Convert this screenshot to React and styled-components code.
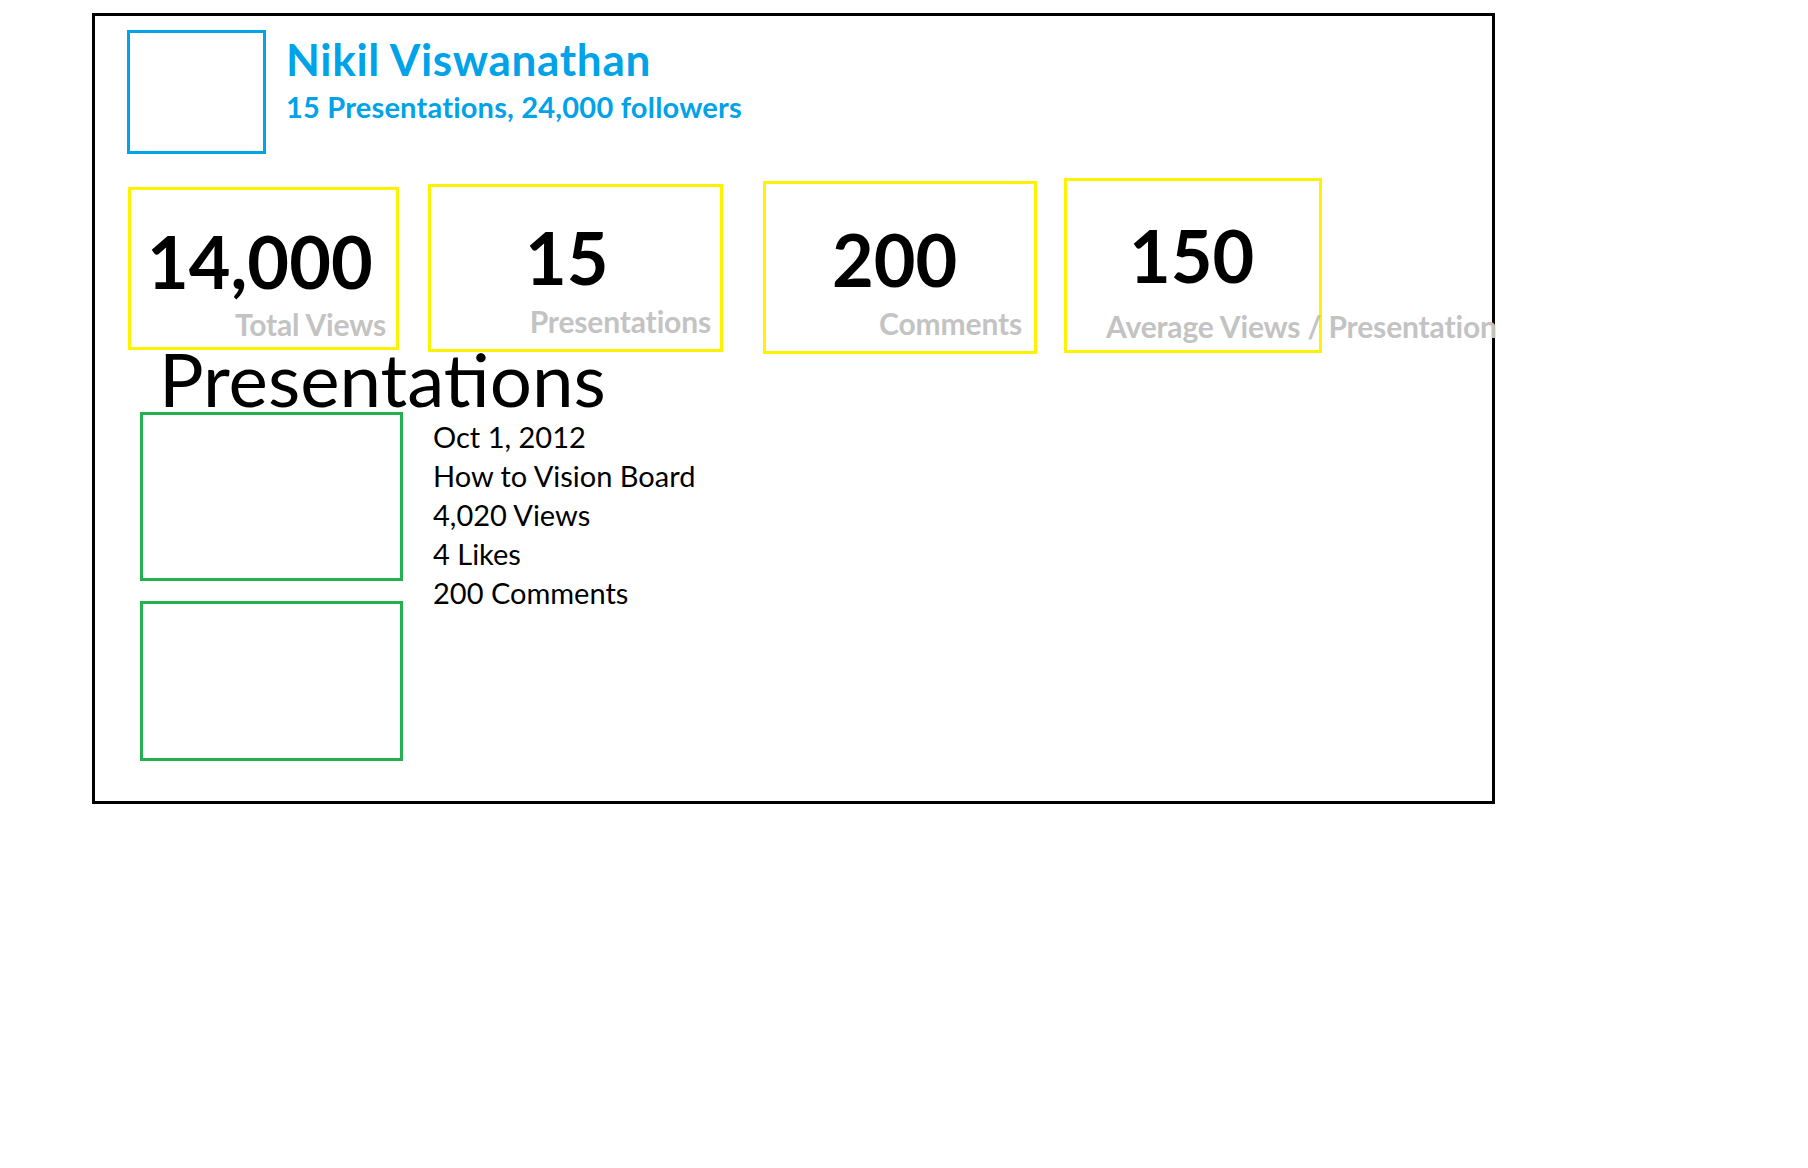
import React from "react";
import styled, { createGlobalStyle } from "styled-components";

const GlobalStyle = createGlobalStyle`
  html, body { margin: 0; padding: 0; background: #ffffff; }
  body { font-family: Lato, "Open Sans", "Liberation Sans", sans-serif; color: #000000; }
  *, *::before, *::after { box-sizing: border-box; }
`;

const Page = styled.div`
  width: 1808px;
  min-height: 1168px;
  padding: 13px 0 0 92px;
`;

const Frame = styled.section`
  width: 1403px;
  height: 791px;
  border: 3px solid #000000;
  padding: 14px 0 0 32px;
`;

const Header = styled.header`
  display: flex;
  align-items: flex-start;
  gap: 20px;
`;

const Avatar = styled.div`
  flex: none;
  width: 139px;
  height: 124px;
  border: 3px solid #00a2e8;
`;

const Identity = styled.div`
  display: flex;
  flex-direction: column;
  padding-top: 8px;
  color: #00a2e8;
`;

const Name = styled.h1`
  margin: 0;
  font-size: 44px;
  line-height: 43px;
  font-weight: 700;
  letter-spacing: 0.7px;
`;

const Meta = styled.p`
  margin: 11px 0 0;
  font-size: 29px;
  line-height: 29px;
  font-weight: 700;
  letter-spacing: 0.2px;
`;

const StatsRow = styled.div`
  display: flex;
  align-items: flex-start;
  margin-top: 24px;
`;

const StatCard = styled.div`
  flex: none;
  display: flex;
  flex-direction: column;
  width: ${(p) => p.$w}px;
  height: ${(p) => p.$h}px;
  margin-top: ${(p) => p.$top}px;
  margin-left: ${(p) => p.$ml}px;
  padding-top: ${(p) => p.$padTop}px;
  border: 3px solid #fff200;
`;

const StatValue = styled.div`
  margin-left: ${(p) => p.$indent}px;
  font-size: 72px;
  line-height: 72px;
  font-weight: 700;
  color: #000000;
`;

const StatLabel = styled.div`
  margin-top: ${(p) => p.$gap}px;
  font-size: 30px;
  line-height: 29px;
  font-weight: 700;
  letter-spacing: -0.15px;
  color: #c3c3c3;
  white-space: nowrap;
  ${(p) =>
    p.$indent != null
      ? `margin-left: ${p.$indent}px;`
      : `align-self: flex-end; margin-right: ${p.$inset}px;`}
`;

const SectionTitle = styled.h2`
  margin: -1px 0 0 32px;
  font-size: 74.5px;
  line-height: 50px;
  font-weight: 400;
`;

const PresentationsBody = styled.div`
  display: flex;
  align-items: flex-start;
  gap: 30px;
  margin: 9px 0 0 13px;
`;

const ThumbColumn = styled.div`
  display: flex;
  flex-direction: column;
  gap: 20px;
`;

const Thumb = styled.div`
  flex: none;
  width: 263px;
  height: ${(p) => p.$h}px;
  border: 3px solid #22b14c;
`;

const Details = styled.div`
  display: flex;
  flex-direction: column;
  margin-top: 5px;
`;

const DetailLine = styled.div`
  font-size: 29px;
  line-height: 39px;
  font-weight: 400;
  white-space: nowrap;
`;

const stats = [
  { value: "14,000", label: "Total Views", w: 271, h: 163, top: 9, ml: 1, padTop: 35, indent: 16, gap: 13, inset: 10 },
  { value: "15", label: "Presentations", w: 295, h: 168, top: 6, ml: 29, padTop: 34, indent: 94, gap: 14, inset: 9 },
  { value: "200", label: "Comments", w: 274, h: 173, top: 3, ml: 40, padTop: 39, indent: 66, gap: 14, inset: 12 },
  { value: "150", label: "Average Views / Presentation", w: 258, h: 175, top: 0, ml: 27, padTop: 38, indent: 62, gap: 21, labelIndent: 39 },
];

const thumbs = [169, 160];

const details = ["Oct 1, 2012", "How to Vision Board", "4,020 Views", "4 Likes", "200 Comments"];

export default function App() {
  return (
    <Page>
      <GlobalStyle />
      <Frame>
        <Header>
          <Avatar />
          <Identity>
            <Name>Nikil Viswanathan</Name>
            <Meta>15 Presentations, 24,000 followers</Meta>
          </Identity>
        </Header>

        <StatsRow>
          {stats.map((s) => (
            <StatCard key={s.label} $w={s.w} $h={s.h} $top={s.top} $ml={s.ml} $padTop={s.padTop}>
              <StatValue $indent={s.indent}>{s.value}</StatValue>
              <StatLabel $gap={s.gap} $inset={s.inset} $indent={s.labelIndent}>
                {s.label}
              </StatLabel>
            </StatCard>
          ))}
        </StatsRow>

        <SectionTitle>Presentations</SectionTitle>

        <PresentationsBody>
          <ThumbColumn>
            {thumbs.map((h, i) => (
              <Thumb key={i} $h={h} />
            ))}
          </ThumbColumn>
          <Details>
            {details.map((line) => (
              <DetailLine key={line}>{line}</DetailLine>
            ))}
          </Details>
        </PresentationsBody>
      </Frame>
    </Page>
  );
}
